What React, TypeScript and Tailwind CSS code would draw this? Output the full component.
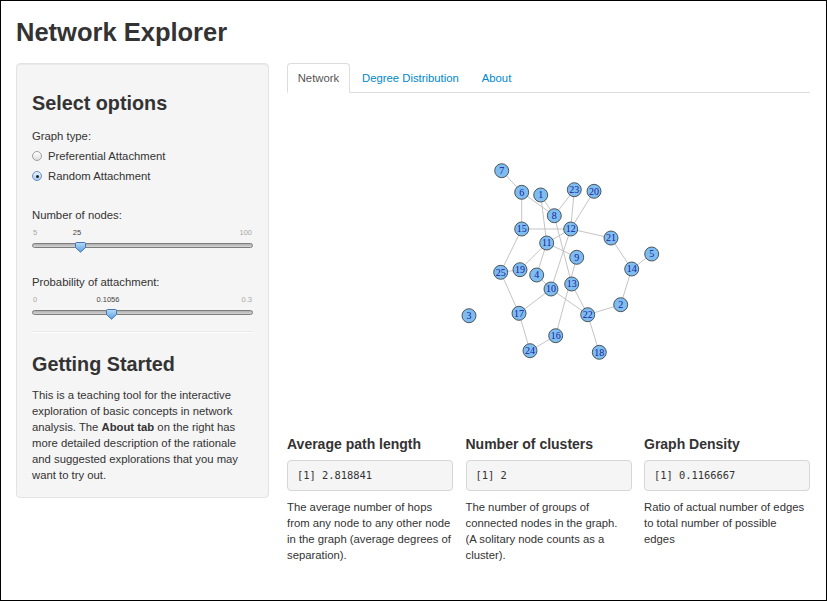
import React from 'react';

const nodes: Record<string, [number, number]> = {
  '7': [501.7, 171.7],
  '6': [521.7, 193.3],
  '1': [540.7, 196],
  '23': [574.3, 190.7],
  '20': [594, 192.3],
  '8': [554.3, 216.7],
  '15': [521.7, 230],
  '12': [570.7, 230],
  '21': [611, 239],
  '11': [546.7, 244],
  '9': [576.7, 258.3],
  '5': [651.7, 255],
  '14': [631.7, 270],
  '25': [500.7, 273.3],
  '19': [520, 270.7],
  '4': [536.7, 276],
  '13': [571.7, 285],
  '10': [551, 290],
  '2': [620.7, 305.7],
  '3': [469, 316.7],
  '17': [519, 314.3],
  '22': [587.7, 315.7],
  '16': [555.7, 336.7],
  '24': [530, 351.7],
  '18': [599.3, 353.3],
};

const edges: [string, string][] = [
  ['7', '6'], ['6', '8'], ['6', '15'], ['1', '8'], ['1', '11'], ['23', '8'],
  ['23', '12'], ['20', '12'], ['12', '11'], ['15', '12'], ['12', '21'], ['12', '10'],
  ['8', '13'], ['11', '9'], ['11', '19'], ['11', '4'], ['15', '25'], ['25', '17'],
  ['4', '10'], ['10', '17'], ['10', '22'], ['13', '22'], ['9', '16'], ['19', '25'],
  ['21', '14'], ['5', '14'], ['14', '2'], ['2', '22'], ['22', '18'], ['17', '24'],
  ['24', '16'],
];

function Radio({ checked, label }: { checked?: boolean; label: string }) {
  return (
    <div className="flex items-center h-[20px]">
      <span
        className={`w-[10px] h-[10px] rounded-full border flex items-center justify-center ${
          checked
            ? 'border-[#6a8fbf] bg-gradient-to-b from-[#e8f2fc] to-[#a9cdf0]'
            : 'border-[#a0a0a0] bg-gradient-to-b from-white to-[#dedede]'
        }`}
      >
        {checked && <span className="w-[3px] h-[3px] rounded-full bg-[#222]" />}
      </span>
      <span className="ml-[6px]">{label}</span>
    </div>
  );
}

function Slider({ min, max, value, pos }: { min: string; max: string; value: string; pos: number }) {
  return (
    <div>
      <div className="relative h-[10px] text-[7.5px] leading-[10px] flex justify-between px-[1px]">
        <span className="text-[#a8a8a8]">{min}</span>
        <span className="absolute text-[#444] -translate-x-1/2" style={{ left: pos - 2 }}>
          {value}
        </span>
        <span className="text-[#a8a8a8]">{max}</span>
      </div>
      <div className="relative mt-[5px] h-[5px] rounded-full border border-[#7d7d7d] bg-gradient-to-b from-[#b0b0b0] to-[#d4d4d4]">
        <svg className="absolute top-[-2px]" style={{ left: pos - 5 }} width="11" height="11" viewBox="0 0 11 11">
          <defs>
            <linearGradient id="hg" x1="0" y1="0" x2="0" y2="1">
              <stop offset="0" stopColor="#b9daf7" />
              <stop offset="1" stopColor="#5e9fe0" />
            </linearGradient>
          </defs>
          <path d="M1.5 0.5 H9.5 Q10.5 0.5 10.5 1.5 V5.5 L5.5 10.2 L0.5 5.5 V1.5 Q0.5 0.5 1.5 0.5 Z" fill="url(#hg)" stroke="#3f77b8" strokeWidth="1" />
        </svg>
      </div>
    </div>
  );
}

function Stat({ title, value, lines }: { title: string; value: string; lines: string[] }) {
  return (
    <div className="w-[166px]">
      <h4 className="text-[14px] font-bold leading-[20px] h-[20px] text-[#333]">{title}</h4>
      <div className="mt-[6px] h-[31px] border border-[#d6d6d6] rounded-[4px] bg-[#f5f5f5] px-[9px] flex items-center font-['DejaVu_Sans_Mono',monospace] text-[10.4px] text-[#333]">
        {value}
      </div>
      <p className="mt-[8px] leading-[16px] whitespace-nowrap">
        {lines.map((l, i) => (
          <React.Fragment key={i}>
            {l}
            {i < lines.length - 1 && <br />}
          </React.Fragment>
        ))}
      </p>
    </div>
  );
}

export default function App() {
  return (
    <div className="w-[827px] h-[601px] border border-black bg-white overflow-hidden pl-[15px] pr-[16px] font-['Liberation_Sans',Arial,sans-serif] text-[11.3px] text-[#333]">
      <h1 className="mt-[16px] h-[30px] leading-[30px] text-[25.5px] font-bold">Network Explorer</h1>

      <div className="mt-[16px] flex gap-[18px] items-start">
        {/* Sidebar */}
        <div className="w-[253px] border border-[#e3e3e3] bg-[#f5f5f5] rounded-[4px] px-[15px] pt-[27px] pb-[14px] shadow-[inset_0_1px_1px_rgba(0,0,0,0.05)]">
          <h3 className="text-[19.8px] font-bold leading-[24px] h-[24px]">Select options</h3>
          <div className="mt-[13px] leading-[16px]">Graph type:</div>
          <div className="mt-[2px]">
            <Radio label="Preferential Attachment" />
            <Radio checked label="Random Attachment" />
          </div>
          <div className="mt-[21px] leading-[16px]">Number of nodes:</div>
          <div className="mt-[5px]">
            <Slider min="5" max="100" value="25" pos={47} />
          </div>
          <div className="mt-[26px] leading-[16px]">Probability of attachment:</div>
          <div className="mt-[5px]">
            <Slider min="0" max="0.3" value="0.1056" pos={78} />
          </div>
          <div className="mt-[16px] h-0 border-t border-[#e8e8e8] border-b border-b-white" />
          <h3 className="mt-[19px] text-[19.8px] font-bold leading-[24px] h-[24px]">Getting Started</h3>
          <p className="mt-[11px] leading-[16px] whitespace-nowrap">
            This is a teaching tool for the interactive
            <br />
            exploration of basic concepts in network
            <br />
            analysis. The <b>About tab</b> on the right has
            <br />
            more detailed description of the rationale
            <br />
            and suggested explorations that you may
            <br />
            want to try out.
          </p>
        </div>

        {/* Main panel */}
        <div className="flex-1">
          <ul className="flex border-b border-[#ddd] h-[30px]">
            <li className="h-[30px] border border-[#ddd] border-b-white bg-white rounded-t-[4px] px-[9.7px] py-[6px] leading-[16px] mr-[1.6px] text-[#555]">
              Network
            </li>
            <li className="h-[30px] border border-transparent px-[9.7px] py-[6px] leading-[16px] mr-[1.6px] text-[#0088cc]">
              Degree Distribution
            </li>
            <li className="h-[30px] border border-transparent px-[9.7px] py-[6px] leading-[16px] text-[#0088cc]">
              About
            </li>
          </ul>

          <svg width="523" height="330" viewBox="287 94 523 330" className="block">
            {edges.map(([a, b], i) => (
              <line
                key={i}
                x1={nodes[a][0]}
                y1={nodes[a][1]}
                x2={nodes[b][0]}
                y2={nodes[b][1]}
                stroke="#bdbdbd"
                strokeWidth="0.9"
              />
            ))}
            {Object.entries(nodes).map(([id, [x, y]]) => (
              <g key={id}>
                <circle cx={x} cy={y} r="7" fill="#7ebdef" stroke="#333" strokeWidth="0.8" />
                <text
                  x={x}
                  y={y + 3.4}
                  textAnchor="middle"
                  fontSize="10"
                  fontFamily="'Liberation Serif', serif"
                  fill="#1a1a9e"
                >
                  {id}
                </text>
              </g>
            ))}
          </svg>

          <div className="mt-[11px] flex gap-[12.5px]">
            <Stat
              title="Average path length"
              value="[1] 2.818841"
              lines={['The average number of hops', 'from any node to any other node', 'in the graph (average degrees of', 'separation).']}
            />
            <Stat
              title="Number of clusters"
              value="[1] 2"
              lines={['The number of groups of', 'connected nodes in the graph.', '(A solitary node counts as a', 'cluster).']}
            />
            <Stat
              title="Graph Density"
              value="[1] 0.1166667"
              lines={['Ratio of actual number of edges', 'to total number of possible', 'edges']}
            />
          </div>
        </div>
      </div>
    </div>
  );
}
